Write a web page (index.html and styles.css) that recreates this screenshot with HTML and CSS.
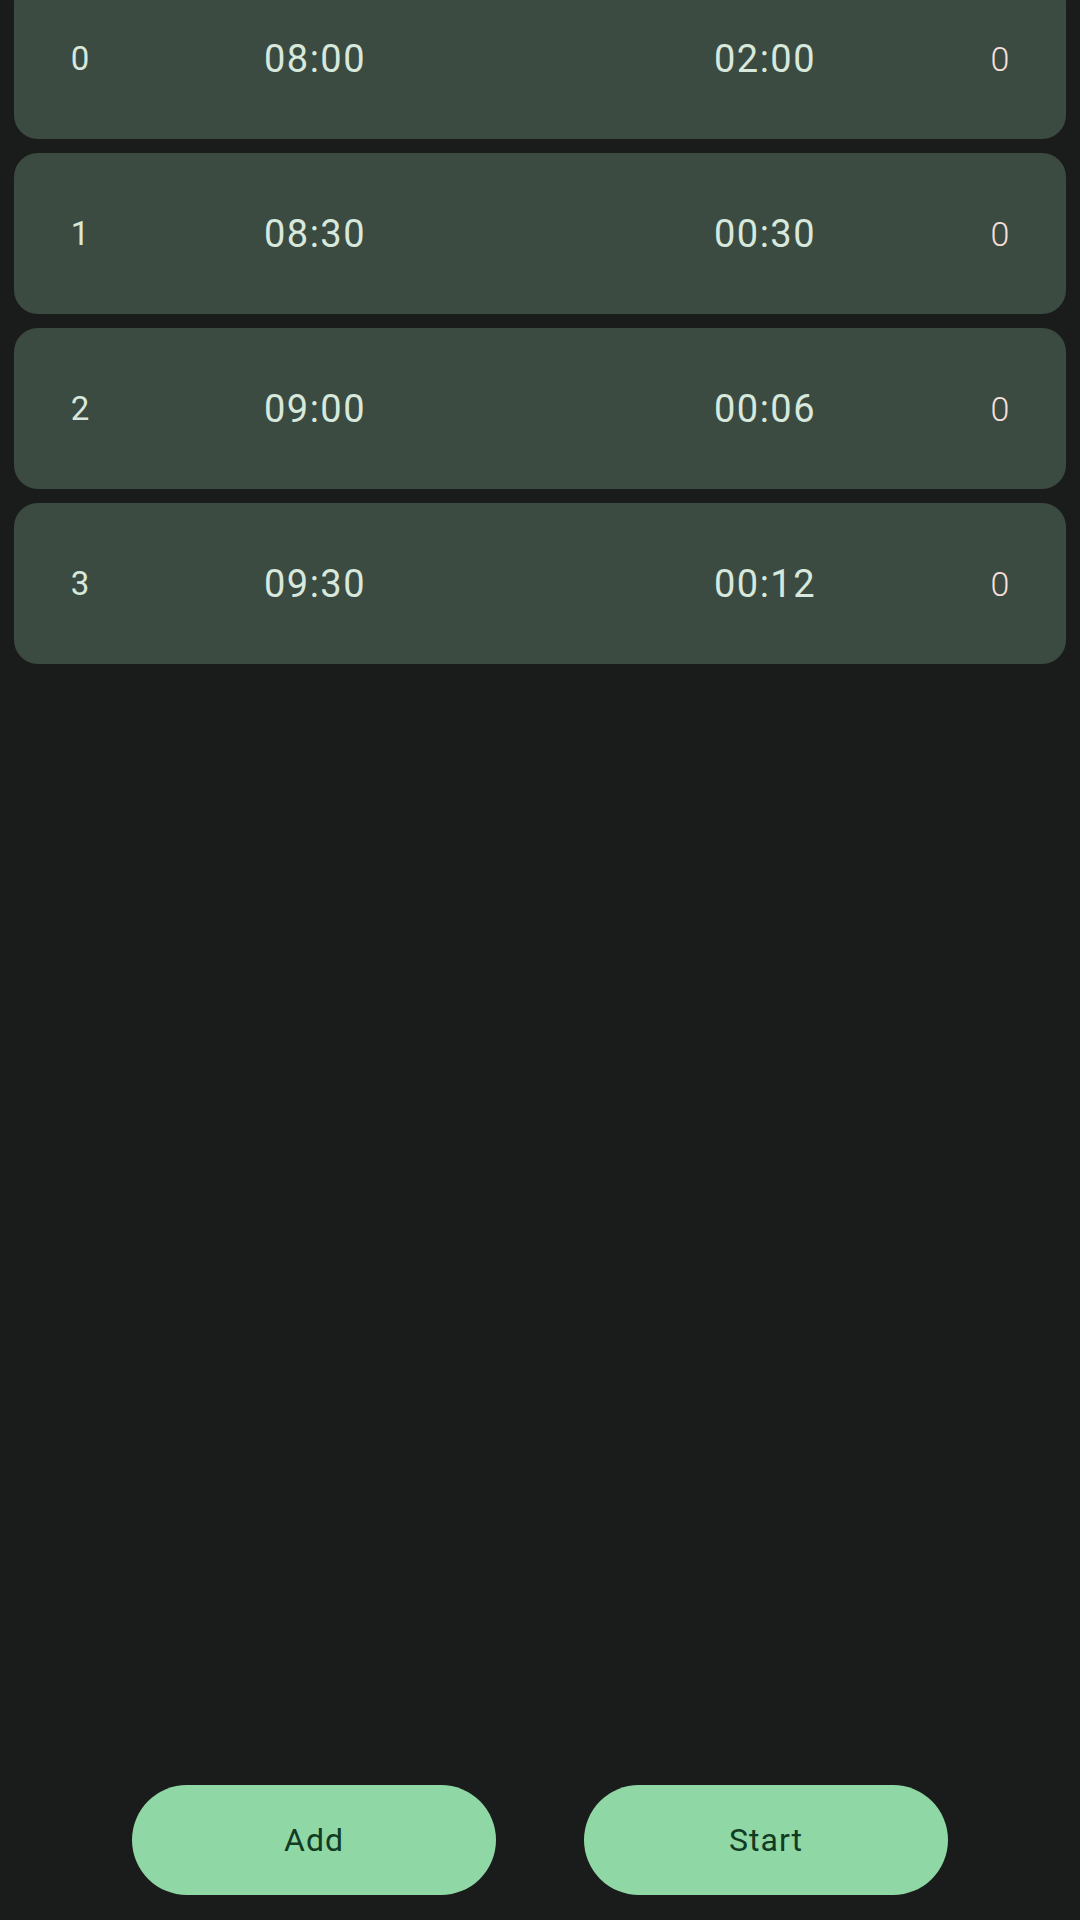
FILE: index.html
```html
<!DOCTYPE html>
<html>
<head>
<meta charset="utf-8">
<link rel="stylesheet" href="styles.css">
</head>
<body>
<div class="page">
  <div class="list">
    <div class="card">
      <div class="idx">0</div><div class="time">08:00</div><div class="dur">02:00</div><div class="count">0</div>
    </div>
    <div class="card">
      <div class="idx">1</div><div class="time">08:30</div><div class="dur">00:30</div><div class="count">0</div>
    </div>
    <div class="card">
      <div class="idx">2</div><div class="time">09:00</div><div class="dur">00:06</div><div class="count">0</div>
    </div>
    <div class="card">
      <div class="idx">3</div><div class="time">09:30</div><div class="dur">00:12</div><div class="count">0</div>
    </div>
  </div>
  <div class="actions">
    <button class="btn">Add</button>
    <button class="btn">Start</button>
  </div>
</div>
</body>
</html>
```

FILE: styles.css
```css
html, body {
  margin: 0;
  padding: 0;
  background: #1a1c1b;
}
.page {
  width: 1080px;
  height: 1920px;
  display: flex;
  flex-direction: column;
  justify-content: space-between;
  overflow: hidden;
  font-family: Roboto, "Noto Sans", sans-serif;
}
.list {
  display: flex;
  flex-direction: column;
  gap: 14px;
  padding: 0 14px;
  margin-top: -22px;
}
.card {
  height: 161px;
  background: #3c4b41;
  border-radius: 24px;
  display: grid;
  grid-template-columns: 132px 338px 181px 200px 85px 100px;
  align-items: center;
  color: #d7e8dc;
}
.card > div {
  text-align: center;
}
.idx {
  grid-column: 1;
  font-size: 33px;
}
.time {
  grid-column: 2;
  font-size: 38px;
  letter-spacing: 1.5px;
}
.dur {
  grid-column: 4;
  font-size: 38px;
  letter-spacing: 1.5px;
}
.count {
  grid-column: 6;
  font-size: 34px;
  font-weight: 300;
  color: #f6dfd9;
}
.actions {
  display: flex;
  justify-content: center;
  gap: 88px;
  padding-bottom: 25px;
}
.btn {
  width: 364px;
  height: 110px;
  border: none;
  border-radius: 55px;
  background: #90d7a6;
  color: #113b23;
  font-family: Roboto, "Noto Sans", sans-serif;
  font-size: 32px;
  letter-spacing: 1px;
  padding: 0;
}
```
